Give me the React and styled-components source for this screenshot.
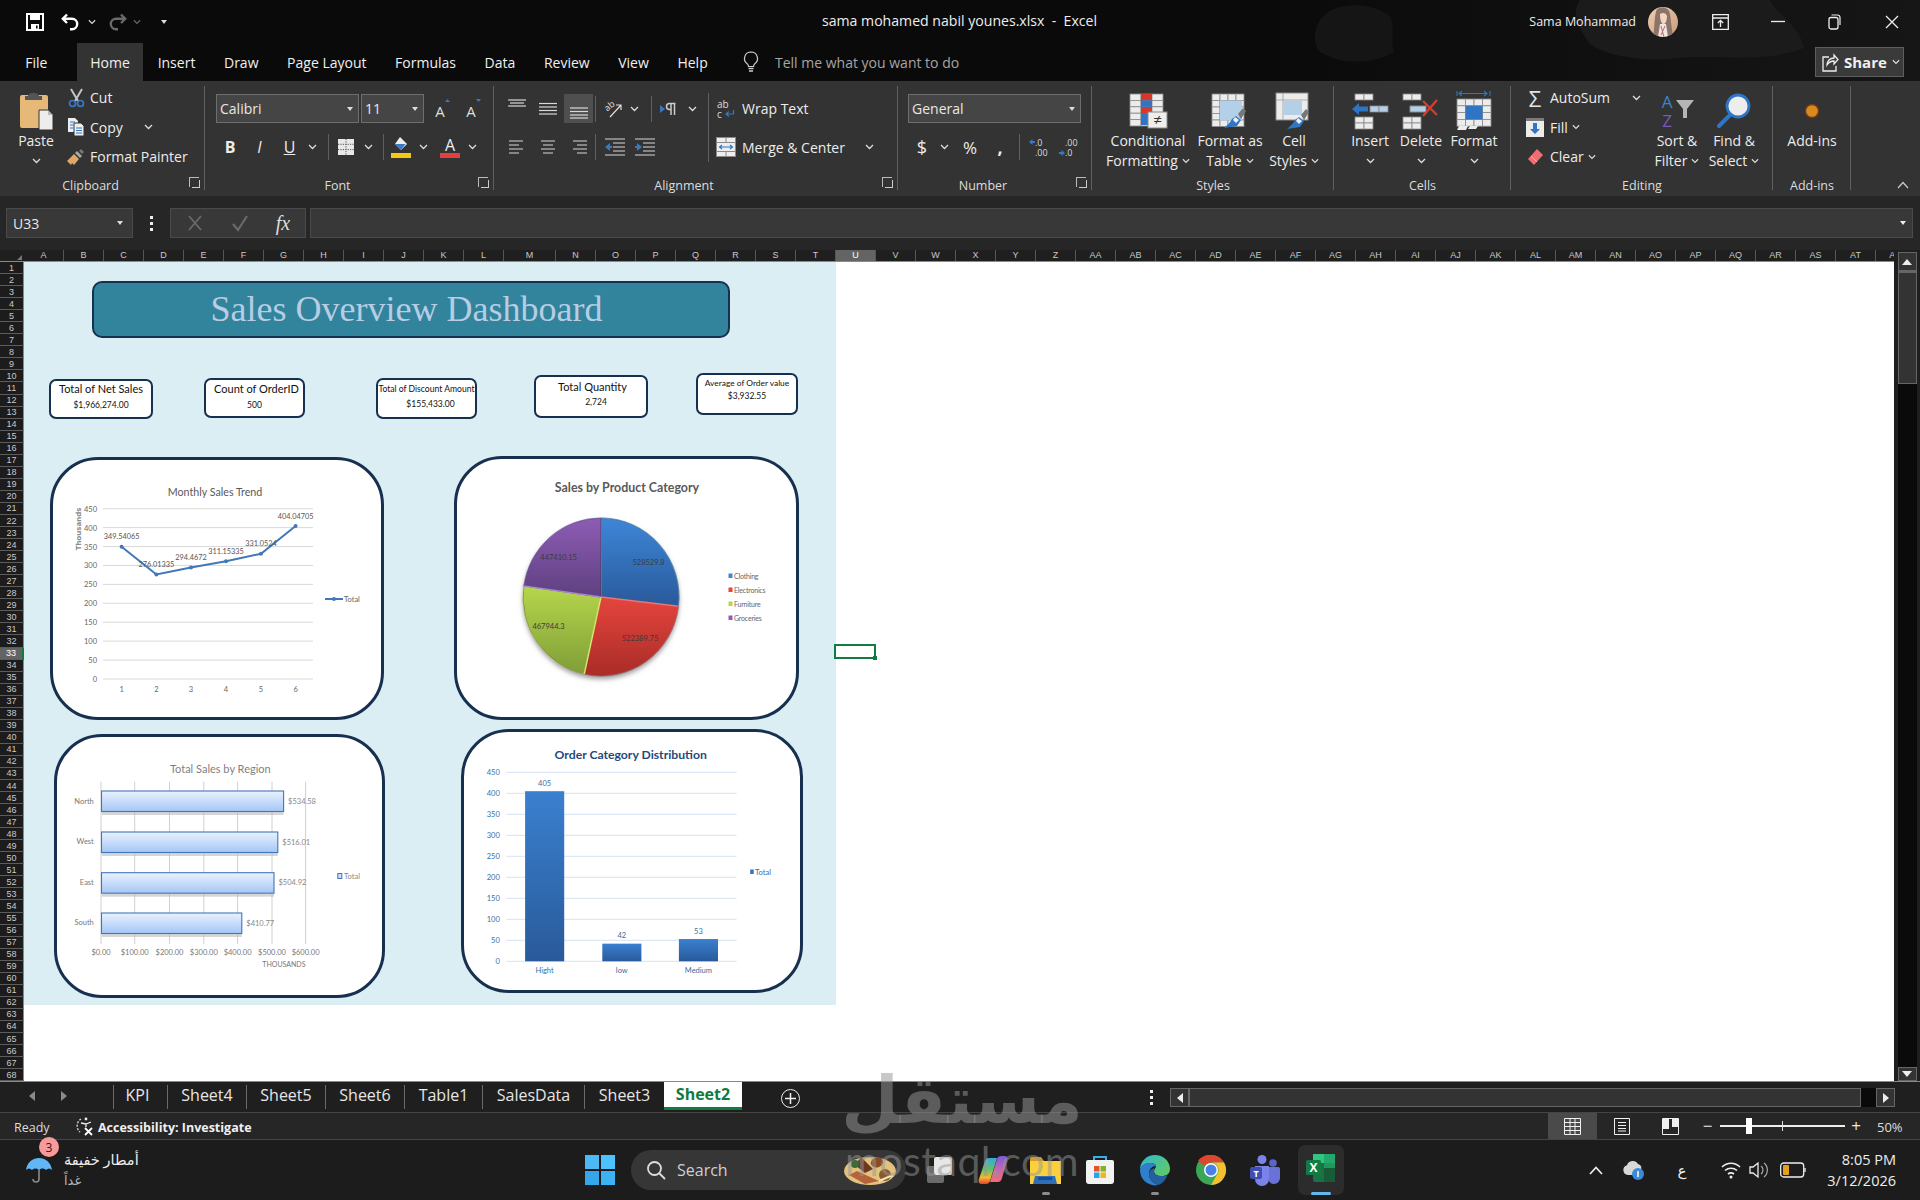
import React from "react";
import styled, { createGlobalStyle } from "styled-components";

const GlobalStyle = createGlobalStyle`
  * { box-sizing: border-box; }
  html, body { margin: 0; padding: 0; background: #1c1c1c; }
  body { font-family: "Open Sans", "Noto Sans", sans-serif; }
  svg { overflow: visible; }
`;

const ui = `"Open Sans", "Noto Sans", "DejaVu Sans", sans-serif`;
const chartFont = `Lato, "Liberation Sans", sans-serif`;

const Window = styled.div`
  width: 1920px;
  height: 1200px;
  position: relative;
  overflow: hidden;
  display: flex;
  flex-direction: column;
  font-family: ${ui};
  color: #eee;
`;

/* top band */
const TopBand = styled.div`
  height: 81px;
  background: #0a0a0a;
  position: relative;
  display: flex;
  flex-direction: column;
`;

const BandArt = styled.svg`
  position: absolute;
  inset: 0;
  width: 100%;
  height: 100%;
`;

const TitleRow = styled.div`
  height: 43px;
  display: flex;
  align-items: center;
  position: relative;
`;

const Qat = styled.div`
  display: flex;
  align-items: center;
  width: 400px;
  padding-left: 26px;
`;

const QatSlot = styled.span`
  display: inline-flex;
  align-items: center;
  justify-content: center;
  width: ${(p) => p.$w}px;
  margin-left: ${(p) => p.$ml || 0}px;
`;

const DocTitle = styled.div`
  position: absolute;
  left: 822px;
  top: 11px;
  font-size: 14.1px;
  line-height: 20px;
  color: #eee;
  white-space: pre;
`;

const WindowTools = styled.div`
  margin-left: auto;
  display: flex;
  align-items: center;
`;

const UserName = styled.span`
  font-size: 12.5px;
  color: #eee;
  margin-right: 12px;
`;

const AvatarWrap = styled.span`
  display: inline-flex;
  margin-right: 14px;
`;

const ToolSlot = styled.span`
  display: inline-flex;
  justify-content: center;
  align-items: center;
  width: 57px;
`;

const TabsRow = styled.div`
  height: 38px;
  display: flex;
  align-items: stretch;
  position: relative;
  padding-left: 11px;
`;

const Tab = styled.div`
  display: flex;
  align-items: center;
  padding: 0 ${(p) => p.$pad ?? 14.3}px;
  margin-left: ${(p) => p.$ml || 0}px;
  font-size: 14px;
  background: ${(p) => (p.$active ? "#333333" : "transparent")};
  color: #f0f0f0;
`;

const TellMe = styled.div`
  display: flex;
  align-items: center;
  margin-left: 20px;
  gap: 15px;
  font-size: 14px;
  color: #a6a6a6;
`;

const ShareButton = styled.div`
  position: absolute;
  left: 1815px;
  top: 4px;
  width: 89px;
  height: 30px;
  background: #3a3a3a;
  border: 1px solid #5e5e5e;
  display: flex;
  align-items: center;
  gap: 5px;
  padding-left: 6px;
  font-size: 15px;
  font-weight: 700;
  color: #f0f0f0;
`;

/* ribbon */
const Ribbon = styled.div`
  height: 115px;
  background: #333333;
  display: flex;
  position: relative;
`;

const Group = styled.div`
  width: ${(p) => p.$w}px;
  position: relative;
  display: flex;
  flex-direction: column;
  &::after {
    content: "";
    position: absolute;
    right: 0;
    top: 5px;
    bottom: 6px;
    width: 1px;
    background: #5f5f5f;
  }
`;

const GroupBody = styled.div`
  flex: 1;
  display: flex;
  min-height: 0;
  padding: ${(p) => p.$pt ?? 2}px 0 0 ${(p) => p.$pl ?? 0}px;
`;

const GroupLabel = styled.div`
  height: 22px;
  line-height: 22px;
  padding: 1px ${(p) => p.$pr || 0}px 0 0;
  text-align: center;
  font-size: 12.5px;
  color: #dcdcdc;
`;

const Launcher = styled.span`
  position: absolute;
  right: 6px;
  bottom: 9px;
  width: 10px;
  height: 10px;
  border-left: 1px solid #bbb;
  border-top: 1px solid #bbb;
  &::after {
    content: "";
    position: absolute;
    left: 2px;
    top: 2px;
    width: 7px;
    height: 7px;
    border-right: 1px solid #ccc;
    border-bottom: 1px solid #ccc;
  }
`;

const CollapseButton = styled.span`
  position: absolute;
  left: 1897px;
  top: 100px;
  display: flex;
`;

const BigButton = styled.div`
  width: ${(p) => p.$w}px;
  flex: none;
  display: flex;
  flex-direction: column;
  align-items: center;
  padding-top: 8px;
  font-size: 14px;
  line-height: 20px;
  color: #ececec;
  white-space: nowrap;
`;

const BigIcon = styled.div`
  height: 40px;
  display: flex;
  align-items: center;
  justify-content: center;
`;

const BigLine = styled.div`
  height: 20px;
  display: flex;
  align-items: center;
  gap: 4px;
`;

const SmallStack = styled.div`
  width: ${(p) => p.$w}px;
  flex: none;
  display: flex;
  flex-direction: column;
  margin: 0 ${(p) => p.$mr || 0}px 0 ${(p) => p.$ml || 0}px;
`;

const SmallRow = styled.div`
  height: 29.5px;
  display: flex;
  align-items: center;
  font-size: 14px;
  color: #ececec;
  white-space: nowrap;
`;

const SmallIcon = styled.span`
  width: 20px;
  flex: none;
  display: inline-flex;
  justify-content: center;
  margin-right: ${(p) => p.$mr ?? 5}px;
`;

const SigmaGlyph = styled.span`
  font-size: 22px;
  line-height: 24px;
  color: #e4e4e4;
`;

const ToolColumn = styled.div`
  display: flex;
  flex-direction: column;
  gap: 12px;
  padding-top: 13px;
`;

const ToolRow = styled.div`
  display: flex;
  align-items: center;
  height: ${(p) => p.$h || 24}px;
  font-size: 14px;
  color: #ececec;
  white-space: nowrap;
`;

const Slot = styled.span`
  flex: none;
  display: inline-flex;
  align-items: center;
  justify-content: center;
  width: ${(p) => p.$w}px;
  height: 100%;
  background: ${(p) => (p.$active ? "#4f4f4f" : "transparent")};
  font-size: ${(p) => p.$size || 14}px;
  font-weight: ${(p) => (p.$bold ? 700 : 400)};
  font-style: ${(p) => (p.$italic ? "italic" : "normal")};
  text-decoration: ${(p) => (p.$under ? "underline" : "none")};
`;

const ToolSep = styled.span`
  flex: none;
  width: 1px;
  height: 26px;
  background: #5f5f5f;
`;

const TallSep = styled.span`
  flex: none;
  width: 1px;
  height: 69px;
  margin: 12px 0 0 10px;
  background: #5f5f5f;
`;

const ComboBox = styled.div`
  width: ${(p) => p.$w}px;
  height: 29px;
  margin-right: ${(p) => p.$mr || 0}px;
  flex: none;
  background: #454545;
  border: 1px solid #6e6e6e;
  display: flex;
  align-items: center;
  justify-content: space-between;
  padding: 0 5px 0 3px;
  font-size: 14px;
  color: #e8e8e8;
`;

const DownTriangle = styled.span`
  width: 0;
  height: 0;
  border-left: 3.5px solid transparent;
  border-right: 3.5px solid transparent;
  border-top: 4px solid ${(p) => p.$color || "#ddd"};
`;

const Spread = styled.span`
  margin-left: ${(p) => p.$ml}px;
  display: inline-flex;
`;

/* formula bar */
const FormulaBar = styled.div`
  height: 54px;
  background: #262626;
  display: flex;
  padding: 12px 7px 12px 6px;
`;

const NameBox = styled.div`
  width: 127px;
  background: #383838;
  border: 1px solid #4a4a4a;
  display: flex;
  align-items: center;
  justify-content: space-between;
  padding: 0 9px 0 6px;
  font-size: 14px;
  color: #e8e8e8;
`;

const FormulaDots = styled.div`
  width: 37px;
  display: flex;
  flex-direction: column;
  align-items: center;
  justify-content: center;
  gap: 3px;
  span {
    width: 3px;
    height: 3px;
    background: #eee;
  }
`;

const FormulaButtons = styled.div`
  width: 136px;
  background: #383838;
  border: 1px solid #4a4a4a;
  display: flex;
  align-items: center;
  padding-left: 1px;
`;

const FormulaInput = styled.div`
  flex: 1;
  margin-left: 4px;
  background: #383838;
  border: 1px solid #4a4a4a;
  display: flex;
  align-items: center;
  justify-content: flex-end;
  padding-right: 6px;
`;

const FxText = styled.span`
  font-family: "Liberation Serif", serif;
  font-style: italic;
  font-size: 20px;
  color: #ddd;
`;

/* grid */
const HeaderRow = styled.div`
  height: 12px;
  display: flex;
  background: #1f1f1f;
  border-bottom: 1px solid #8a8a8a;
  position: relative;
`;

const CornerCell = styled.div`
  width: 24px;
  flex: none;
  display: flex;
  justify-content: flex-end;
  align-items: flex-end;
  padding: 0 2px 1px 0;
`;

const ColHeaders = styled.div`
  display: flex;
  width: 1872px;
  overflow: hidden;
`;

const ColHead = styled.div`
  width: ${(p) => (p.$wide ? 52 : 40)}px;
  flex: none;
  text-align: center;
  font-size: 9px;
  line-height: 11px;
  font-family: "Liberation Sans", sans-serif;
  color: ${(p) => (p.$sel ? "#fff" : "#c9c9c9")};
  background: ${(p) => (p.$sel ? "#646464" : "transparent")};
  border-right: 1px solid #555;
`;

const SheetRow = styled.div`
  height: 819px;
  display: flex;
  background: #1f1f1f;
`;

const RowHeaders = styled.div`
  width: 24px;
  flex: none;
  display: flex;
  flex-direction: column;
`;

const RowHead = styled.div`
  flex: 1;
  display: flex;
  align-items: center;
  justify-content: center;
  font-size: 9px;
  font-family: "Liberation Sans", sans-serif;
  color: ${(p) => (p.$sel ? "#fff" : "#c9c9c9")};
  background: ${(p) => (p.$sel ? "#646464" : "#1c1c1c")};
  border-bottom: 1px solid #5c5c5c;
  border-right: ${(p) => (p.$sel ? "2px solid #107c41" : "1px solid #8a8a8a")};
`;

const Canvas = styled.div`
  width: 1870px;
  flex: none;
  background: #fff;
  position: relative;
`;

const DashPanel = styled.div`
  width: 812px;
  height: 743px;
  background: #daeef3;
  position: relative;
`;

const SelectedCell = styled.div`
  position: absolute;
  left: 810px;
  top: 382px;
  width: 42px;
  height: 15px;
  border: 2px solid #107c41;
  &::after {
    content: "";
    position: absolute;
    right: -3px;
    bottom: -3px;
    width: 4px;
    height: 4px;
    background: #107c41;
  }
`;

const Banner = styled.div`
  position: absolute;
  left: 67.5px;
  top: 18.5px;
  width: 638px;
  height: 57px;
  padding-right: 8px;
  background: #31849b;
  border: 2.5px solid #17304f;
  border-radius: 10px;
  display: flex;
  align-items: center;
  justify-content: center;
  font-family: "Liberation Serif", serif;
  font-size: 36px;
  color: #b8cce4;
`;

const KpiCard = styled.div`
  position: absolute;
  left: ${(p) => p.$x - 24}px;
  top: ${(p) => p.$y - 262}px;
  width: ${(p) => p.$w}px;
  height: ${(p) => p.$h}px;
  background: #fff;
  border: 2.5px solid #17304f;
  border-radius: 7px;
  display: flex;
  flex-direction: column;
  align-items: center;
  padding-top: ${(p) => p.$pt}px;
  font-family: ${chartFont};
  color: #111;
`;

const KpiTitle = styled.div`
  font-size: ${(p) => p.$size}px;
  line-height: 13px;
  margin-left: ${(p) => p.$tx || 0}px;
  white-space: nowrap;
`;

const KpiValue = styled.div`
  font-size: 8.5px;
  line-height: 10px;
  margin-top: ${(p) => p.$gap}px;
  margin-left: ${(p) => p.$vx || 0}px;
  white-space: nowrap;
`;

const ChartCard = styled.div`
  position: absolute;
  left: ${(p) => p.$x - 24}px;
  top: ${(p) => p.$y - 262}px;
  width: ${(p) => p.$w}px;
  height: ${(p) => p.$h}px;
  background: #fff;
  border: 3px solid #17304f;
  border-radius: 48px;
  overflow: hidden;
  svg {
    display: block;
    width: 100%;
    height: 100%;
    font-family: ${chartFont};
  }
`;

const VScroll = styled.div`
  width: 26px;
  flex: none;
  display: flex;
  flex-direction: column;
  align-items: center;
  margin-top: -12px;
  position: relative;
  background: #1f1f1f;
  padding-top: 2px;
`;

const ScrollButton = styled.div`
  width: 19px;
  height: ${(p) => p.$h}px;
  background: #333;
  border: 1px solid #666;
  display: flex;
  align-items: center;
  justify-content: center;
`;

const ScrollThumb = styled.div`
  width: 19px;
  height: 113px;
  background: #333;
  border: 1px solid #666;
  border-top-width: 2px;
`;

const ScrollTrack = styled.div`
  width: 19px;
  flex: 1;
  background: #0a0a0a;
`;

/* sheet tabs */
const TabStrip = styled.div`
  height: 32px;
  background: #1f1f1f;
  border-top: 1px solid #8a8a8a;
  border-bottom: 1px solid #444;
  display: flex;
  align-items: flex-start;
  position: relative;
`;

const TabNav = styled.div`
  width: 113px;
  height: 28px;
  flex: none;
  display: flex;
  align-items: center;
  padding-left: 27px;
  gap: 22px;
`;

const SheetTab = styled.div`
  width: ${(p) => p.$w}px;
  height: ${(p) => (p.$active ? 28 : 24)}px;
  margin-top: ${(p) => (p.$active ? 0 : 3)}px;
  padding: 0 ${(p) => p.$pr || 0}px ${(p) => (p.$active ? 1 : 4)}px 0;
  flex: none;
  display: flex;
  align-items: center;
  justify-content: center;
  font-size: 16px;
  background: ${(p) => (p.$active ? "#fff" : "transparent")};
  color: ${(p) => (p.$active ? "#107c41" : "#e6e6e6")};
  font-weight: ${(p) => (p.$active ? 700 : 400)};
  border-left: ${(p) => (p.$active ? "none" : "1px solid #6a6a6a")};
  border-bottom: ${(p) => (p.$active ? "3px solid #107c41" : "none")};
`;

const AddSheet = styled.div`
  margin-left: 39px;
  margin-top: 7px;
  width: 19px;
  height: 19px;
  border: 1.5px solid #eee;
  border-radius: 50%;
  display: flex;
  align-items: center;
  justify-content: center;
`;

const HScrollArea = styled.div`
  position: absolute;
  left: 1146px;
  right: 25px;
  top: 6px;
  height: 19px;
  display: flex;
  align-items: center;
`;

const HDots = styled(FormulaDots)`
  width: 10px;
  margin-right: 14px;
`;

const HButton = styled.div`
  width: 19px;
  height: 19px;
  background: #333;
  border: 1px solid #666;
  display: flex;
  align-items: center;
  justify-content: center;
`;

const HThumb = styled.div`
  flex: 1;
  height: 19px;
  background: #333;
  border: 1px solid #666;
`;

const HTrack = styled.div`
  width: 15px;
  height: 19px;
  background: #0a0a0a;
`;

/* status bar */
const StatusBar = styled.div`
  height: 27px;
  background: #262626;
  border-bottom: 1px solid #444;
  display: flex;
  align-items: center;
  font-size: 12.5px;
  color: #ddd;
`;

const ReadyText = styled.span`
  margin: 2px 0 0 14px;
  width: 61px;
`;

const AccessText = styled.span`
  font-weight: 700;
  color: #f0f0f0;
  margin: 2px 0 0 3px;
`;

const StatusRight = styled.div`
  margin-left: auto;
  display: flex;
  align-items: center;
  height: 100%;
`;

const ViewButton = styled.div`
  width: 49px;
  height: 100%;
  display: flex;
  align-items: center;
  justify-content: center;
  background: ${(p) => (p.$active ? "#4a4a4a" : "transparent")};
`;

const ZoomSign = styled.span`
  width: ${(p) => p.$w}px;
  text-align: center;
  font-size: 17px;
  line-height: 20px;
  color: #e8e8e8;
`;

const ZoomTrack = styled.div`
  width: 125px;
  height: 2px;
  background: #eee;
  position: relative;
`;

const ZoomThumb = styled.span`
  position: absolute;
  left: 26px;
  top: -7px;
  width: 6px;
  height: 16px;
  background: #fff;
`;

const ZoomTick = styled.span`
  position: absolute;
  left: 62px;
  top: -4px;
  width: 1px;
  height: 10px;
  background: #ddd;
`;

const ZoomValue = styled.span`
  width: 53px;
  padding: 2px 0 0 10px;
  font-size: 13px;
`;

/* taskbar */
const Taskbar = styled.div`
  flex: 1;
  background: #1c1c1c;
  display: flex;
  align-items: center;
  position: relative;
`;

const Weather = styled.div`
  width: 585px;
  flex: none;
  display: flex;
  align-items: center;
  padding-left: 25px;
  position: relative;
`;

const WeatherBadge = styled.span`
  position: absolute;
  left: 39px;
  top: -12px;
  width: 20px;
  height: 20px;
  border-radius: 50%;
  background: #f79a9a;
  color: #222;
  font-size: 12px;
  display: flex;
  align-items: center;
  justify-content: center;
`;

const WeatherText = styled.div`
  margin-left: 11px;
  display: flex;
  flex-direction: column;
  align-items: flex-start;
  font-family: "Noto Sans", "DejaVu Sans", sans-serif;
  font-size: 14.5px;
  line-height: 21px;
  small {
    font-size: 13px;
    color: #b5b5b5;
  }
`;

const StartButton = styled.span`
  display: inline-flex;
  width: 46px;
`;

const SearchBox = styled.div`
  width: 275px;
  height: 40px;
  background: #363636;
  border-radius: 20px;
  display: flex;
  align-items: center;
  padding: 0 9px 0 15px;
  gap: 11px;
  font-size: 16px;
  color: #cfcfcf;
  margin-right: 7px;
  span {
    flex: 1;
  }
`;

const TaskSlot = styled.div`
  width: ${(p) => p.$w}px;
  height: 60px;
  flex: none;
  display: flex;
  align-items: center;
  justify-content: center;
  position: relative;
  &::after {
    content: "";
    display: ${(p) => (p.$dot || p.$active ? "block" : "none")};
    position: absolute;
    bottom: 5px;
    left: 50%;
    transform: translateX(-50%);
    width: ${(p) => (p.$active ? 20 : 8)}px;
    height: 3px;
    border-radius: 2px;
    background: ${(p) => (p.$active ? "#63b9ee" : "#8c8c8c")};
  }
`;

const ExcelTile = styled.div`
  width: 46px;
  height: 50px;
  border-radius: 7px;
  background: #2c2c2c;
  display: flex;
  align-items: center;
  justify-content: center;
  padding-bottom: 4px;
`;

const TraySlot = styled.span`
  width: ${(p) => p.$w}px;
  flex: none;
  display: inline-flex;
  justify-content: center;
  font-size: 15px;
  color: #eee;
`;

const Clock = styled.div`
  width: 78px;
  display: flex;
  flex-direction: column;
  align-items: flex-end;
  font-size: 14.5px;
  line-height: 21px;
  color: #eee;
  white-space: nowrap;
`;

const Watermark = styled.div`
  position: absolute;
  left: 842px;
  top: 1056px;
  width: 240px;
  display: flex;
  flex-direction: column;
  align-items: center;
  pointer-events: none;
  color: rgba(150, 150, 150, 0.52);
  line-height: 1;
`;

const WatermarkArabic = styled.div`
  font-family: "DejaVu Sans", sans-serif;
  font-weight: 700;
  font-size: 66px;
  line-height: 90px;
`;

const WatermarkLatin = styled.div`
  font-family: "Lato", sans-serif;
  font-size: 41px;
  line-height: 30px;
  letter-spacing: 0.5px;
`;

/* small drawn icons */
const Chevron = ({ color = "#ddd", w = 9 }) => (
  <svg width={w} height="6" viewBox="0 0 9 6">
    <path d="M1 1l3.5 3.5L8 1" fill="none" stroke={color} strokeWidth="1.3" />
  </svg>
);

const SaveIcon = () => (
  <svg width="18" height="18" viewBox="0 0 18 18">
    <path d="M1 1h16v16H1z" fill="none" stroke="#fff" strokeWidth="2" />
    <path d="M4 1h10v6H4z" fill="#fff" />
    <path d="M5 11h8v6H5z" fill="#fff" />
    <path d="M10 12.5h1.6v3H10z" fill="#0a0a0a" />
  </svg>
);

const UndoIcon = ({ color = "#fff", flip }) => (
  <svg width="20" height="18" viewBox="0 0 20 18">
    <g transform={flip ? "translate(20 0) scale(-1 1)" : undefined}>
      <path d="M6 1.5L1.8 5.8 6 10" fill="none" stroke={color} strokeWidth="2.4" />
      <path d="M2.5 5.8h8.5a5.2 5.2 0 0 1 0 10.4H9" fill="none" stroke={color} strokeWidth="2.4" />
    </g>
  </svg>
);

const BulbIcon = () => (
  <svg width="18" height="22" viewBox="0 0 18 22">
    <path d="M9 1a6.5 6.5 0 0 0-3.6 11.9c.8.7 1 1.4 1 2.6h5.2c0-1.2.2-1.9 1-2.6A6.5 6.5 0 0 0 9 1z" fill="none" stroke="#ccc" strokeWidth="1.2" />
    <path d="M6.5 17.5h5M7 20h4" stroke="#ccc" strokeWidth="1.4" />
  </svg>
);

const RibbonDisplayIcon = () => (
  <svg width="17" height="16" viewBox="0 0 17 16">
    <path d="M.7.7h15.6v14.6H.7z" fill="none" stroke="#eee" strokeWidth="1.3" />
    <path d="M1 4h15" stroke="#eee" strokeWidth="1.5" />
    <path d="M8.5 13V6.5M5.8 9l2.7-2.7L11.2 9" fill="none" stroke="#eee" strokeWidth="1.3" />
  </svg>
);

const Avatar = () => (
  <svg width="30" height="30" viewBox="0 0 30 30">
    <defs>
      <linearGradient id="avatarBg" x1="0" y1="0" x2="1" y2="1">
        <stop offset="0" stopColor="#f1cdb0" />
        <stop offset="1" stopColor="#c99a80" />
      </linearGradient>
      <clipPath id="avatarClip"><circle cx="15" cy="15" r="15" /></clipPath>
    </defs>
    <g clipPath="url(#avatarClip)">
      <rect width="30" height="30" fill="url(#avatarBg)" />
      <path d="M9 2c5-3 12-2 13 5 1 8 2 16 3 23H5C7 20 6 8 9 2z" fill="#8d7468" />
      <path d="M12 7c3-2 6-1 7 2 0 4-1 7-3 8s-4-3-4-10z" fill="#f3d5c0" />
      <path d="M12 17l6 0 2 13H10z" fill="#efe6df" />
      <path d="M13 19l3 11M17 19l-4 9" stroke="#b06a7c" strokeWidth="1" />
    </g>
  </svg>
);

const ShareIcon = () => (
  <svg width="17" height="20" viewBox="0 0 17 20">
    <path d="M7 5H1v14h13v-5" fill="none" stroke="#eee" strokeWidth="1.3" />
    <path d="M5 13c0-4 3-7 7-7V3l4 4.5L12 12V9c-3 0-5 1-7 4z" fill="none" stroke="#eee" strokeWidth="1.3" />
  </svg>
);

const PasteIcon = () => (
  <svg width="36" height="40" viewBox="0 0 36 40">
    <path d="M2 6a2 2 0 0 1 2-2h24a2 2 0 0 1 2 2v31H4a2 2 0 0 1-2-2z" fill="#e6b978" />
    <path d="M7 5h3c0-4 11-4 11 0h3v4H7z" fill="#555" />
    <path d="M21 19h9l5 5v15H21z" fill="#ededed" stroke="#333" strokeWidth="1" />
    <path d="M30 19v5h5z" fill="#bbb" />
  </svg>
);

const CutIcon = () => (
  <svg width="17" height="20" viewBox="0 0 17 20">
    <path d="M3 1l7 12M14 1L7 13" stroke="#c4c4c4" strokeWidth="2" />
    <circle cx="4.5" cy="15.5" r="3" fill="none" stroke="#3a78c4" strokeWidth="1.7" />
    <circle cx="12.5" cy="15.5" r="3" fill="none" stroke="#3a78c4" strokeWidth="1.7" />
  </svg>
);

const CopyIcon = () => (
  <svg width="18" height="20" viewBox="0 0 18 20">
    <path d="M1 1h7l3 3v11H1z" fill="#eee" />
    <path d="M7 6h7l3 3v10H7z" fill="#eee" stroke="#333" strokeWidth="1" />
    <path d="M3 5h5M3 8h3M3 11h3M9 11h6M9 13.5h6M9 16h6" stroke="#2f75c4" strokeWidth="1.2" />
  </svg>
);

const PainterIcon = () => (
  <svg width="20" height="18" viewBox="0 0 20 18">
    <path d="M1 13l7-7 5 5-5 6-2-2-1 2z" fill="#dfa868" />
    <path d="M9 5l2-2 5 5-2 2z" fill="#aaa" />
    <path d="M13 3l2-2 3 3-2 2z" fill="#777" />
  </svg>
);

const GrowFont = ({ up }) => (
  <svg width="20" height="24" viewBox="0 0 20 24">
    <text x="9" y="20" textAnchor="middle" fontSize="15" fill="#ddd" fontFamily="Open Sans">A</text>
    <path d={up ? "M14 5l2.5-3 2.5 3z" : "M14 2h5l-2.5 3z"} fill="#3a78c4" />
  </svg>
);

const BordersIcon = () => (
  <svg width="18" height="18" viewBox="0 0 18 18">
    <rect x="1" y="1" width="16" height="16" fill="#e8e8e8" />
    <path d="M9 1v16M1 6.3h16M1 11.6h16" stroke="#555" strokeWidth="1" strokeDasharray="1.2 1.2" />
  </svg>
);

const FillColorIcon = () => (
  <svg width="20" height="22" viewBox="0 0 20 22">
    <path d="M9 1l7 7-6 6-6-6z" fill="#eee" />
    <path d="M3.5 8h11l-4.5 6z" fill="#3a78c4" />
    <rect y="17" width="20" height="5" fill="#f2c811" />
  </svg>
);

const FontColorIcon = () => (
  <svg width="20" height="24" viewBox="0 0 20 24">
    <text x="10" y="16" textAnchor="middle" fontSize="16" fill="#eee" fontFamily="Open Sans">A</text>
    <rect y="18" width="20" height="5" fill="#e04040" />
  </svg>
);

const AlignVIcon = ({ mode }) => {
  const ys = { top: [3, 6, 9], mid: [6.5, 10, 13.5, 17], bottom: [11, 14.5, 18, 21] }[mode];
  return (
    <svg width="20" height="24" viewBox="0 0 20 24">
      {ys.map((y, i) => (
        <path key={y} d={`M${i === 1 && mode === "top" ? 3 : 1} ${y}H${i === 1 && mode === "top" ? 17 : 19}`} stroke="#d8d8d8" strokeWidth="1.2" />
      ))}
    </svg>
  );
};

const AlignHIcon = ({ mode }) => {
  const line = (y, len) => {
    if (mode === "left") return `M1 ${y}H${1 + len}`;
    if (mode === "right") return `M${17 - len} ${y}H17`;
    return `M${9 - len / 2} ${y}H${9 + len / 2}`;
  };
  return (
    <svg width="18" height="16" viewBox="0 0 18 16">
      <path d={[line(2, 14), line(6, 10), line(10, 14), line(14, 10)].join("")} stroke="#d8d8d8" strokeWidth="1.2" />
    </svg>
  );
};

const IndentIcon = ({ out }) => (
  <svg width="20" height="18" viewBox="0 0 20 18">
    <path d="M0 1h20M8 5h12M8 9h12M8 13h12M0 17h20" stroke="#d8d8d8" strokeWidth="1.2" />
    <path d={out ? "M0 9l5-4v3h2v2H5v3z" : "M7 9L2 5v3H0v2h2v3z"} fill="#3a78c4" />
  </svg>
);

const OrientIcon = () => (
  <svg width="20" height="20" viewBox="0 0 20 20">
    <text x="3" y="11" fontSize="9" fill="#ddd" fontFamily="Open Sans" transform="rotate(-40 6 10)">ab</text>
    <path d="M7 18L18 6M13 6h5v5" fill="none" stroke="#ddd" strokeWidth="1.2" />
  </svg>
);

const RtlIcon = () => (
  <svg width="18" height="14" viewBox="0 0 18 14">
    <path d="M0 3l5 4-5 4z" fill="#3a78c4" />
    <path d="M11 1v12M14.5 1v12M15.5 1.5h-6a3 3 0 0 0 0 6h2" fill="none" stroke="#ccc" strokeWidth="1.5" />
  </svg>
);

const WrapIcon = () => (
  <svg width="18" height="24" viewBox="0 0 18 24">
    <text x="0" y="11" fontSize="10" fill="#ddd" fontFamily="Open Sans">ab</text>
    <text x="0" y="21" fontSize="10" fill="#ddd" fontFamily="Open Sans">c</text>
    <path d="M16.5 13v4h-7M12 14.5L9 17l3 2.5" fill="none" stroke="#3a78c4" strokeWidth="1.2" />
  </svg>
);

const MergeIcon = () => (
  <svg width="20" height="20" viewBox="0 0 20 20">
    <rect width="20" height="20" fill="#8a8a8a" />
    <path d="M1 1h8.5v4H1zM10.5 1H19v4h-8.5zM1 15h8.5v4H1zM10.5 15H19v4h-8.5z" fill="#eee" />
    <rect x="1" y="6" width="18" height="8" fill="#eee" />
    <path d="M4 10h12M6 8l-2.5 2L6 12M14 8l2.5 2-2.500 2" fill="none" stroke="#2f75c4" strokeWidth="1.2" />
  </svg>
);

const DecimalIcon = ({ inc }) => (
  <svg width="20" height="24" viewBox="0 0 20 24">
    <text x="6" y="10.5" fontSize="9" fill="#ddd" fontFamily="Open Sans">{inc ? ".0" : ".00"}</text>
    <text x="6" y="21" fontSize="9" fill="#ddd" fontFamily="Open Sans">{inc ? ".00" : ".0"}</text>
    <path d={inc ? "M0 7l3.5-3v2H6v2H3.5v2z" : "M6 18l-3.5-3v2H0v2h2.5v2z"} fill="#3a78c4" />
  </svg>
);

const CellBlock = ({ x, y, cols, rows, w = 9, h = 6, fill = "#ececec", stroke = "#8a8a8a" }) => {
  const out = [];
  for (let r = 0; r < rows; r++) {
    for (let c = 0; c < cols; c++) {
      out.push(<rect key={`${r}-${c}`} x={x + c * w} y={y + r * h} width={w} height={h} fill={fill} stroke={stroke} strokeWidth="0.8" />);
    }
  }
  return <g>{out}</g>;
};

const BrushTip = ({ x, y }) => (
  <g transform={`translate(${x} ${y})`}>
    <path d="M14 0l5-6 3 3-5 8z" fill="#777" />
    <path d="M12 2l5 4-4 6-13 2c3-3 6-5 8-9z" fill="#2f75c4" />
    <path d="M11 3l4 3-3 3-3-3z" fill="#eee" />
  </g>
);

const ConditionalIcon = () => (
  <svg width="38" height="36" viewBox="0 0 38 36">
    <CellBlock x={1} y={1} cols={3} rows={5} w={11} h={6.4} />
    <rect x="12" y="1" width="11" height="6.4" fill="#d8382c" />
    <rect x="12" y="7.4" width="11" height="6.4" fill="#2f75c4" />
    <rect x="12" y="14" width="11" height="6.4" fill="#d8382c" />
    <rect x="12" y="20" width="11" height="12" fill="#2f75c4" />
    <rect x="19" y="19" width="19" height="16" fill="#eee" stroke="#8a8a8a" />
    <text x="28.5" y="32" textAnchor="middle" fontSize="15" fill="#333" fontFamily="Open Sans">≠</text>
  </svg>
);

const FormatTableIcon = () => (
  <svg width="38" height="36" viewBox="0 0 38 36">
    <CellBlock x={1} y={1} cols={4} rows={5} w={8} h={6.5} />
    <rect x="9" y="7.5" width="22" height="20" fill="#b4cfe8" />
    <BrushTip x={13} y={21} />
  </svg>
);

const CellStylesIcon = () => (
  <svg width="38" height="38" viewBox="0 0 38 38">
    <rect x="1" y="1" width="32" height="27" fill="#ececec" stroke="#8a8a8a" />
    <path d="M1 8h32M8 1v27" stroke="#aaa" />
    <rect x="9" y="9" width="18" height="14" fill="#b4cfe8" />
    <BrushTip x={12} y={23} />
  </svg>
);

const InsertIcon = () => (
  <svg width="36" height="36" viewBox="0 0 36 36">
    <CellBlock x={3} y={1} cols={2} rows={1} w={9} h={6} />
    <CellBlock x={18} y={13} cols={2} rows={1} w={9} h={6} fill="#b4cfe8" />
    <CellBlock x={3} y={24} cols={2} rows={2} w={9} h={6} />
    <path d="M0 16l7-6v3.5h9v5H7V22z" fill="#2f75c4" />
  </svg>
);

const DeleteIcon = () => (
  <svg width="36" height="36" viewBox="0 0 36 36">
    <CellBlock x={0} y={1} cols={2} rows={1} w={9} h={6} />
    <rect x="7" y="13" width="16" height="6" fill="#b4cfe8" stroke="#8a8a8a" />
    <CellBlock x={0} y={24} cols={2} rows={2} w={9} h={6} />
    <path d="M20 8l14 14M34 7L20 23" stroke="#d83a2c" strokeWidth="2.4" />
  </svg>
);

const FormatCellsIcon = () => (
  <svg width="36" height="42" viewBox="0 0 36 42">
    <path d="M1 1v5M34 1v5M3 3.5h28M6 1L3 3.5 6 6M28 1l3 2.5L28 6" fill="none" stroke="#2f75c4" strokeWidth="1.1" />
    <CellBlock x={1} y={9} cols={4} rows={4} w={8.5} h={6.8} />
    <rect x="9.5" y="15.800" width="17" height="13.6" fill="#2f75c4" />
    <path d="M3 36h9l-2 4H1zM14 36h8l-2 3h-8z" fill="#ececec" />
  </svg>
);

const FillIcon = () => (
  <svg width="18" height="19" viewBox="0 0 18 19">
    <rect width="18" height="19" fill="#ececec" />
    <rect width="18" height="3" fill="#7b7b7b" />
    <path d="M9 16l-5-5h3V5h4v6h3z" fill="#2f75c4" />
  </svg>
);

const EraserIcon = () => (
  <svg width="18" height="18" viewBox="0 0 18 18">
    <path d="M11 1l6 6-9 10-6-6z" fill="#ee6e73" />
    <path d="M5 8l6 6" stroke="#f6b3b5" strokeWidth="1" />
  </svg>
);

const SortIcon = () => (
  <svg width="36" height="40" viewBox="0 0 36 40">
    <text x="8" y="17" textAnchor="middle" fontSize="17" fill="#3a83d0" fontFamily="Open Sans">A</text>
    <text x="8" y="36" textAnchor="middle" fontSize="17" fill="#7a5ab5" fontFamily="Open Sans">Z</text>
    <path d="M17 9h18l-7 9v9h-4v-9z" fill="#b5b5b5" />
  </svg>
);

const FindIcon = () => (
  <svg width="36" height="38" viewBox="0 0 36 38">
    <circle cx="22" cy="14" r="11" fill="#ededed" stroke="#2f75c4" strokeWidth="2.8" />
    <path d="M14 23L3 34" stroke="#2f75c4" strokeWidth="4" strokeLinecap="round" />
  </svg>
);

const AddInIcon = () => (
  <svg width="16" height="16" viewBox="0 0 16 16">
    <circle cx="8" cy="8" r="6.5" fill="#d98a1c" stroke="#7a3a1a" strokeWidth="1.3" />
  </svg>
);

const IconX = ({ color }) => (
  <svg width="18" height="18" viewBox="0 0 18 18">
    <path d="M3 2l12 14M15 2L3 16" stroke={color} strokeWidth="1.8" />
  </svg>
);

const IconCheck = ({ color }) => (
  <svg width="18" height="18" viewBox="0 0 18 18">
    <path d="M2 10l5 6L16 2" fill="none" stroke={color} strokeWidth="2.2" />
  </svg>
);

const CloseIcon = () => (
  <svg width="14" height="14" viewBox="0 0 14 14">
    <path d="M1 1l12 12M13 1L1 13" stroke="#eee" strokeWidth="1.3" />
  </svg>
);

const RestoreIcon = () => (
  <svg width="13" height="16" viewBox="0 0 13 16">
    <rect x="1" y="3.5" width="9" height="11.5" rx="2" fill="none" stroke="#eee" strokeWidth="1.3" />
    <path d="M3.5 1h6A2.5 2.5 0 0 1 12 3.5V11" fill="none" stroke="#eee" strokeWidth="1.2" />
  </svg>
);

const MinIcon = () => (
  <svg width="14" height="4" viewBox="0 0 14 4">
    <path d="M0 1.5h14" stroke="#eee" strokeWidth="1.3" />
  </svg>
);

const ArrowTri = ({ dir, color = "#eee", s = 5 }) => {
  const paths = {
    up: "M0 8L5 2l5 6z",
    down: "M0 2l5 6 5-6z",
    left: "M8 0L2 5l6 5z",
    right: "M2 0l6 5-6 5z",
  };
  return (
    <svg width={s * 2} height={s * 2} viewBox="0 0 10 10">
      <path d={paths[dir]} fill={color} />
    </svg>
  );
};

const AccessIcon = () => (
  <svg width="20" height="20" viewBox="0 0 20 20">
    <path d="M6 3a8 8 0 0 0-1 13" fill="none" stroke="#ddd" strokeWidth="1.3" strokeDasharray="2 1.5" />
    <circle cx="11" cy="3" r="1.4" fill="#eee" />
    <path d="M6 7l5 1 5-2M11 8v3" stroke="#eee" strokeWidth="1.3" fill="none" />
    <path d="M10 12l7 7M17 12l-7 7" stroke="#fff" strokeWidth="1.8" />
  </svg>
);

const GridViewIcon = () => (
  <svg width="17" height="17" viewBox="0 0 17 17">
    <path d="M.5.5h16v16H.5zM.5 4.500h16M.5 8.500h16M.5 12.500h16M6 .5v16M11 .5v16" fill="none" stroke="#f0f0f0" />
  </svg>
);

const PageViewIcon = () => (
  <svg width="16" height="17" viewBox="0 0 16 17">
    <path d="M.5.5h15v16H.5z" fill="none" stroke="#f0f0f0" />
    <path d="M4 4.500h8M4 7.500h8M4 10.500h8M4 13h8" stroke="#f0f0f0" />
  </svg>
);

const BreakViewIcon = () => (
  <svg width="17" height="17" viewBox="0 0 17 17">
    <path d="M.5.5h16v16H.5z" fill="none" stroke="#f0f0f0" />
    <path d="M1 1h6v10H1zM10 1h6v8h-6z" fill="#f0f0f0" />
  </svg>
);

const UmbrellaIcon = () => (
  <svg width="28" height="26" viewBox="0 0 28 26">
    <path d="M1 13C2 5 8 1 14 1s12 4 13 12c-2-2-4-2-6 0-2-2-5-2-7 0-2-2-5-2-7 0-2-2-4-2-6 0z" fill="#62b6f5" />
    <path d="M14 12v10c0 4-6 4-6 0" fill="none" stroke="#8a8a8a" strokeWidth="1.6" />
  </svg>
);

const WinLogo = () => (
  <svg width="30" height="30" viewBox="0 0 30 30">
    <path d="M0 0h14v14H0z" fill="#4cb8f5" />
    <path d="M16 0h14v14H16z" fill="#4cc2ff" />
    <path d="M0 16h14v14H0z" fill="#33a6ec" />
    <path d="M16 16h14v14H16z" fill="#3db2f2" />
  </svg>
);

const SearchIcon = () => (
  <svg width="20" height="20" viewBox="0 0 20 20">
    <circle cx="8.5" cy="8.5" r="6.5" fill="none" stroke="#ddd" strokeWidth="1.8" />
    <path d="M13 13l6 6" stroke="#ddd" strokeWidth="1.8" />
  </svg>
);

const SearchDoodle = () => (
  <svg width="54" height="34" viewBox="0 0 54 34">
    <ellipse cx="27" cy="18" rx="26" ry="14" fill="#e2c27e" />
    <path d="M6 22l16 9 14-3-22-10z" fill="#b5643a" />
    <path d="M18 4l12 12-8 4-10-8z" fill="#6a3a20" />
    <path d="M30 6c4-3 9-2 10 2s-5 8-9 6-4-5-1-8z" fill="#8a4a24" />
    <circle cx="42" cy="22" r="6" fill="#8a5a2a" />
    <circle cx="12" cy="11" r="4" fill="#3d6a3a" />
    <path d="M36 28l14-6" stroke="#f0e2c0" strokeWidth="2" />
  </svg>
);

const TaskViewIcon = () => (
  <svg width="26" height="26" viewBox="0 0 26 26">
    <rect x="0" y="9" width="17" height="17" rx="2" fill="#6b6b6b" />
    <rect x="7" y="0" width="18" height="18" rx="2" fill="#e6e6e6" />
  </svg>
);

const CopilotIcon = () => (
  <svg width="30" height="30" viewBox="0 0 30 30">
    <defs>
      <linearGradient id="copA" x1="0" y1="0" x2="0" y2="1">
        <stop offset="0" stopColor="#38a8e0" />
        <stop offset="0.45" stopColor="#63c25f" />
        <stop offset="0.75" stopColor="#f2b830" />
        <stop offset="1" stopColor="#e8402f" />
      </linearGradient>
      <linearGradient id="copB" x1="0" y1="0" x2="0" y2="1">
        <stop offset="0" stopColor="#7a5ad8" />
        <stop offset="0.5" stopColor="#c06ab0" />
        <stop offset="1" stopColor="#f56a70" />
      </linearGradient>
    </defs>
    <path d="M11 3h8L12 26c-.7 2-2 3-4 3H4c-3 0-4-2-3-5l6-18c.7-2 2-3 4-3z" fill="url(#copA)" />
    <path d="M20 27h-8l7-23c.7-2 2-3 4-3h3c3 0 4 2 3 5l-5 17c-.7 2.500-2 4-4 4z" fill="url(#copB)" />
  </svg>
);

const ExplorerIcon = () => (
  <svg width="32" height="28" viewBox="0 0 32 28">
    <path d="M0 3a2 2 0 0 1 2-2h9l3 4H0z" fill="#d89a22" />
    <rect y="5" width="31" height="23" fill="#fccf3e" />
    <path d="M5 20h20l2 8H3z" fill="#2f6fb8" />
    <path d="M8 21h14v3H8z" fill="#1a4f8f" />
  </svg>
);

const StoreIcon = () => (
  <svg width="30" height="30" viewBox="0 0 30 30">
    <path d="M9 6V2h12v4" fill="none" stroke="#3aaee8" strokeWidth="2" />
    <path d="M1 7a2 2 0 0 1 2-2h24a2 2 0 0 1 2 2v19a3 3 0 0 1-3 3H4a3 3 0 0 1-3-3z" fill="#f2f2f2" />
    <rect x="9" y="11" width="5.5" height="5.5" fill="#e8502a" />
    <rect x="15.5" y="11" width="5.5" height="5.5" fill="#7fb429" />
    <rect x="9" y="17.5" width="5.5" height="5.5" fill="#2aa4e8" />
    <rect x="15.5" y="17.5" width="5.5" height="5.5" fill="#f2b811" />
  </svg>
);

const EdgeIcon = () => (
  <svg width="30" height="30" viewBox="0 0 30 30">
    <defs>
      <linearGradient id="edgeA" x1="0" y1="0" x2="1" y2="0.6">
        <stop offset="0" stopColor="#2fb6d8" />
        <stop offset="1" stopColor="#5dc96a" />
      </linearGradient>
    </defs>
    <path d="M15 0c8 0 15 6 15 14 0 5-4 7-8 7-5 0-8-2-8-5 0-2 2-3 2-5s-3-3-6-3C5 8 1 11 0 15 0 6 7 0 15 0z" fill="url(#edgeA)" />
    <path d="M0 15C1 10 5 8 10 8c3 0 6 1 6 3-4 0-7 3-7 8 0 4 3 9 9 11-1 .3-2 .4-3 .4C7 30 0 24 0 15z" fill="#2f7fcc" />
    <path d="M14 16c0 3 3 5 8 5 2 0 4-.5 5.5-1.500C26 25 22 29 18 30c-6-2-9-7-9-11 0-3 2-5 5-6z" fill="#245f9e" />
  </svg>
);

const ChromeIcon = () => (
  <svg width="30" height="30" viewBox="0 0 30 30">
    <circle cx="15" cy="15" r="15" fill="#3aa757" />
    <path d="M15 0a15 15 0 0 1 13 7.5H15a7.5 7.5 0 0 0-6.500 3.700L2 5.500A15 15 0 0 1 15 0z" fill="#e0452f" />
    <path d="M28 7.5A15 15 0 0 1 15 30l6.500-11.200A7.500 7.500 0 0 0 15 7.500z" fill="#f5c02c" />
    <circle cx="15" cy="15" r="7" fill="#fff" />
    <circle cx="15" cy="15" r="5.5" fill="#4a80e8" />
  </svg>
);

const TeamsIcon = () => (
  <svg width="30" height="30" viewBox="0 0 30 30">
    <circle cx="12" cy="4.5" r="4.5" fill="#7b83eb" />
    <circle cx="23" cy="8" r="3.8" fill="#5b64c9" />
    <path d="M18 12h10a2 2 0 0 1 2 2v9a6 6 0 0 1-12 0z" fill="#6a72d8" />
    <path d="M5 11h14v13a7 7 0 0 1-14 0z" fill="#7b83eb" />
    <rect y="12" width="12" height="12" rx="2" fill="#3f4fb0" />
    <text x="6" y="21.5" textAnchor="middle" fontSize="9" fontWeight="700" fill="#fff" fontFamily="Open Sans">T</text>
  </svg>
);

const ExcelIcon = () => (
  <svg width="30" height="30" viewBox="0 0 30 30">
    <rect x="7" y="1" width="22" height="28" rx="2" fill="#1d7044" />
    <path d="M7 1h22v9H7z" fill="#33c481" />
    <path d="M18 1h11v14H18z" fill="#21a366" opacity="0.8" />
    <path d="M18 15h11v14H18z" fill="#185c37" />
    <rect y="7" width="15" height="15" rx="1.5" fill="#107c41" />
    <text x="7.5" y="18.5" textAnchor="middle" fontSize="12" fontWeight="700" fill="#fff" fontFamily="Open Sans">X</text>
  </svg>
);

const CloudIcon = () => (
  <svg width="24" height="22" viewBox="0 0 24 22">
    <path d="M6 16a5 5 0 0 1-1-9.800A6 6 0 0 1 16 5a4 4 0 0 1 2 7v4z" fill="#d8d8d8" />
    <circle cx="16" cy="15" r="6" fill="#3a8ad8" />
    <path d="M16 12v6" stroke="#fff" strokeWidth="1.5" />
  </svg>
);

const WifiIcon = () => (
  <svg width="20" height="18" viewBox="0 0 20 18">
    <path d="M1 6c5-5 13-5 18 0M4 9.500c3.500-3 8.500-3 12 0M7 13c2-1.500 4-1.500 6 0" fill="none" stroke="#eee" strokeWidth="1.6" />
    <circle cx="10" cy="16" r="1.5" fill="#eee" />
  </svg>
);

const VolumeIcon = () => (
  <svg width="20" height="18" viewBox="0 0 20 18">
    <path d="M1 6h3l5-4v14l-5-4H1z" fill="none" stroke="#eee" strokeWidth="1.3" />
    <path d="M12 5a5 5 0 0 1 0 8M15 2a9 9 0 0 1 0 14" fill="none" stroke="#aaa" strokeWidth="1.2" />
  </svg>
);

const BatteryIcon = () => (
  <svg width="26" height="16" viewBox="0 0 26 16">
    <rect x=".7" y="1" width="23" height="14" rx="3" fill="none" stroke="#eee" strokeWidth="1.3" />
    <rect x="3" y="3" width="6" height="10" rx="1" fill="#e6a020" />
    <path d="M25 6v4" stroke="#eee" strokeWidth="1.3" />
  </svg>
);

/* charts */
const cardBox = (x, y, w, h) => `${x + 3} ${y + 3} ${w - 6} ${h - 6}`;

const LineChart = () => {
  const values = [349.54065, 276.01335, 294.4672, 311.15335, 331.0524, 404.04705];
  const xs = [121.6, 156.4, 191, 226, 261, 295.6];
  const labelY = [536.7, 564.7, 557, 551, 543, 516.7];
  const toY = (v) => 679 - (v * 170.3) / 450;
  return (
    <svg viewBox={cardBox(50, 457, 334, 263)}>
      <text x="215" y="495.5" textAnchor="middle" fontSize="10.7" fill="#595959">Monthly Sales Trend</text>
      {[0, 50, 100, 150, 200, 250, 300, 350, 400, 450].map((t) => (
        <g key={t}>
          <path d={`M103 ${toY(t)}H313`} stroke="#d9d9d9" strokeWidth="1" />
          <text x="97" y={toY(t) + 3} textAnchor="end" fontSize="7.5" fill="#666">{t}</text>
        </g>
      ))}
      <text transform="translate(81 529) rotate(-90)" textAnchor="middle" fontSize="7" fontWeight="700" fill="#8a8a8a" fontFamily="DejaVu Sans">Thousands</text>
      <polyline points={values.map((v, i) => `${xs[i]},${toY(v)}`).join(" ")} fill="none" stroke="#4278b8" strokeWidth="2" />
      {values.map((v, i) => (
        <g key={v}>
          <circle cx={xs[i]} cy={toY(v)} r="2" fill="#4278b8" />
          <text x={xs[i]} y={labelY[i] + 2.5} textAnchor="middle" fontSize="7.3" fill="#555">{String(v)}</text>
          <text x={xs[i]} y="692" textAnchor="middle" fontSize="7.5" fill="#666">{i + 1}</text>
        </g>
      ))}
      <path d="M325 599h18" stroke="#4278b8" strokeWidth="2" />
      <circle cx="334" cy="599" r="2" fill="#4278b8" />
      <text x="344" y="602" fontSize="7.5" fill="#666">Total</text>
    </svg>
  );
};

const pieSlices = [
  { value: 528529.8, text: "528529.8", name: "Clothing", top: "#3e86d8", bottom: "#29599a", edge: "#6db9f2", lx: 648.6, ly: 562 },
  { value: 522389.75, text: "522389.75", name: "Electronics", top: "#e5453d", bottom: "#a92c27", edge: "#f58080", lx: 640, ly: 638.7 },
  { value: 467944.3, text: "467944.3", name: "Furniture", top: "#b6d64c", bottom: "#7f9e37", edge: "#e8f56c", lx: 548.5, ly: 626 },
  { value: 447410.15, text: "447410.15", name: "Groceries", top: "#8d5cb5", bottom: "#5f4080", edge: "#b08ce0", lx: 558.6, ly: 557 },
];

const PieChart = () => {
  const cx = 601;
  const cy = 597;
  const rx = 78;
  const ry = 79;
  const total = pieSlices.reduce((s, p) => s + p.value, 0);
  const point = (a) => [cx + rx * Math.sin(a), cy - ry * Math.cos(a)];
  let angle = 0;
  return (
    <svg viewBox={cardBox(454, 456, 345, 264)}>
      <defs>
        {pieSlices.map((s) => (
          <linearGradient key={s.name} id={`pie${s.name}`} x1="0" y1="0" x2="0" y2="1">
            <stop offset="0" stopColor={s.top} />
            <stop offset="1" stopColor={s.bottom} />
          </linearGradient>
        ))}
        <filter id="pieShadow" x="-20%" y="-20%" width="140%" height="140%">
          <feGaussianBlur stdDeviation="2.5" />
        </filter>
      </defs>
      <text x="627" y="492" textAnchor="middle" fontSize="12.4" fontWeight="700" fill="#595959">Sales by Product Category</text>
      <ellipse cx={cx} cy={cy + 3} rx={rx} ry={ry} fill="#999" filter="url(#pieShadow)" />
      {pieSlices.map((s) => {
        const start = angle;
        angle += (s.value / total) * Math.PI * 2;
        const [x0, y0] = point(start);
        const [x1, y1] = point(angle);
        return (
          <g key={s.name}>
            <path d={`M${cx} ${cy}L${x0} ${y0}A${rx} ${ry} 0 0 1 ${x1} ${y1}Z`} fill={`url(#pie${s.name})`} stroke="#2a3342" strokeWidth="0.6" />
            <path d={`M${cx} ${cy}L${x0} ${y0}`} stroke={s.edge} strokeWidth="1.5" opacity="0.9" />
            <path d={`M${x0} ${y0}A${rx} ${ry} 0 0 1 ${x1} ${y1}`} fill="none" stroke={s.edge} strokeWidth="1.2" opacity="0.45" />
          </g>
        );
      })}
      {pieSlices.map((s) => (
        <text key={s.text} x={s.lx} y={s.ly + 2.5} textAnchor="middle" fontSize="7.5" fill="#3c3c3c">{s.text}</text>
      ))}
      {pieSlices.map((s, i) => (
        <g key={`legend${s.name}`}>
          <rect x="728.5" y={573.5 + i * 14} width="4" height="4.5" fill={s.top} />
          <text x="734" y={578.5 + i * 14} fontSize="7" letterSpacing="-0.2" fill="#666">{s.name}</text>
        </g>
      ))}
    </svg>
  );
};

const RegionChart = () => {
  const ticks = [100.7, 134.4, 169.2, 203.5, 237.3, 271.7, 305.3];
  const bars = [
    { name: "North", end: 283.3, y: 791, text: "$534.58", ty: 801.7, cy: 801.7 },
    { name: "West", end: 277.5, y: 832, text: "$516.01", ty: 842.7, cy: 841.7 },
    { name: "East", end: 273.7, y: 872.7, text: "$504.92", ty: 882.7, cy: 882.7 },
    { name: "South", end: 241.5, y: 913, text: "$410.77", ty: 923.7, cy: 922.7 },
  ];
  return (
    <svg viewBox={cardBox(53.7, 734, 331, 264)}>
      <defs>
        <linearGradient id="regionBar" x1="0" y1="0" x2="0" y2="1">
          <stop offset="0" stopColor="#eaf2fe" />
          <stop offset="1" stopColor="#a5c6f6" />
        </linearGradient>
      </defs>
      <text x="220" y="773" textAnchor="middle" fontSize="11" fill="#7f7f7f">Total Sales by Region</text>
      {ticks.map((x, i) => (
        <g key={x}>
          <path d={`M${x} 781.7V944`} stroke="#d0d0d0" strokeWidth="1" />
          <text x={x} y="955" textAnchor="middle" fontSize="7.5" fill="#777">{`$${i * 100}.00`}</text>
        </g>
      ))}
      {bars.map((b) => (
        <g key={b.name}>
          <rect x="101.5" y={b.y + 21} width={b.end - 101.5} height="3" fill="#bbb" opacity="0.6" />
          <rect x="101.2" y={b.y} width={b.end - 101.2} height="20.5" fill="url(#regionBar)" stroke="#4076ba" strokeWidth="1.1" />
          <text x="93.5" y={b.cy + 2.5} textAnchor="end" fontSize="7.5" fill="#777">{b.name}</text>
          <text x={b.end + 4.5} y={b.ty + 2.5} fontSize="7.5" fill="#888">{b.text}</text>
        </g>
      ))}
      <text x="283.6" y="966.5" textAnchor="middle" fontSize="7" fill="#777">THOUSANDS</text>
      <rect x="337.5" y="873.5" width="4" height="5" fill="#cfe0fa" stroke="#4076ba" />
      <text x="343.8" y="878.5" fontSize="7.5" fill="#888">Total</text>
    </svg>
  );
};

const OrderChart = () => {
  const toY = (v) => 961.3 - (v * 189) / 450;
  const bars = [
    { name: "Hight", x: 524.9, v: 405 },
    { name: "low", x: 602.1, v: 42 },
    { name: "Medium", x: 678.7, v: 53 },
  ];
  return (
    <svg viewBox={cardBox(460.8, 729, 342, 264)}>
      <defs>
        <linearGradient id="orderBar" x1="0" y1="0" x2="0" y2="1">
          <stop offset="0" stopColor="#3a80cf" />
          <stop offset="1" stopColor="#295a9b" />
        </linearGradient>
      </defs>
      <text x="630.5" y="758.5" textAnchor="middle" fontSize="12.2" fontWeight="700" fill="#1f497d">Order Category Distribution</text>
      {[0, 50, 100, 150, 200, 250, 300, 350, 400, 450].map((t) => (
        <g key={t}>
          <path d={`M506.2 ${toY(t)}H736.4`} stroke="#d5e3f5" strokeWidth="1" />
          <text x="499.6" y={toY(t) + 2.5} textAnchor="end" fontSize="7.5" fill="#3a6ea5">{t}</text>
        </g>
      ))}
      {bars.map((b) => (
        <g key={b.name}>
          <rect x={b.x} y={toY(b.v)} width="39.1" height={961.3 - toY(b.v)} fill="url(#orderBar)" />
          <text x={b.x + 19.5} y={toY(b.v) - 5.5} textAnchor="middle" fontSize="7.5" fill="#3a6ea5">{b.v}</text>
          <text x={b.x + 19.5} y="972.5" textAnchor="middle" fontSize="7.5" fill="#3a6ea5">{b.name}</text>
        </g>
      ))}
      <rect x="750" y="869.5" width="3.5" height="4.5" fill="#2f75c4" />
      <text x="754.9" y="874.5" fontSize="7.5" fill="#3a6ea5">Total</text>
    </svg>
  );
};

const columnNames = () => {
  const letters = "ABCDEFGHIJKLMNOPQRSTUVWXYZ".split("");
  const second = "ABCDEFGHIJKLMNOPQRSTU".split("").map((l) => `A${l}`);
  return [...letters, ...second];
};

const kpis = [
  { x: 49, y: 379, w: 104, h: 40, pt: 1, size: 11, gap: 5, tx: 0, vx: 0, title: "Total of Net Sales", value: "$1,966,274.00" },
  { x: 204, y: 378, w: 101, h: 40, pt: 2, size: 11, gap: 5, tx: 4, vx: 0, title: "Count of OrderID", value: "500" },
  { x: 376, y: 378, w: 101, h: 41, pt: 3, size: 8.6, gap: 3, tx: 0, vx: 8, title: "Total of Discount Amount", value: "$155,433.00" },
  { x: 534, y: 375, w: 114, h: 43, pt: 3, size: 11, gap: 4, tx: 3, vx: 10, title: "Total Quantity", value: "2,724" },
  { x: 696, y: 373, w: 102, h: 42, pt: 2, size: 8.4, gap: 1, tx: 0, vx: 0, title: "Average of Order value", value: "$3,932.55" },
];

const sheetTabs = [
  ["KPI", 54, 6],
  ["Sheet4", 79, 0],
  ["Sheet5", 79, 0],
  ["Sheet6", 79, 0],
  ["Table1", 78, 0],
  ["SalesData", 102, 0],
  ["Sheet3", 80, 0],
];

const App = () => (
  <Window>
    <GlobalStyle />
    <TopBand>
      <BandArt viewBox="0 0 1920 81" preserveAspectRatio="none">
        <defs>
          <linearGradient id="bandFade" x1="0" y1="0" x2="1" y2="0">
            <stop offset="0" stopColor="#0a0a0a" />
            <stop offset="1" stopColor="#161616" />
          </linearGradient>
        </defs>
        <rect x="1260" width="660" height="81" fill="url(#bandFade)" />
        <path d="M1320 20c10-18 50-20 70-4 6 10 0 24 4 36-20 12-50 14-74 0-8-10-6-22 0-32z" fill="#151515" />
        <path d="M1580 0h190c8 16 30 26 34 48-40 16-90 6-124 10-30 4-70 0-90-14-10-14-20-30-10-44z" fill="#1b1b1b" />
      </BandArt>
      <TitleRow>
        <Qat>
          <QatSlot $w={18}><SaveIcon /></QatSlot>
          <QatSlot $w={20} $ml={17}><UndoIcon /></QatSlot>
          <QatSlot $w={10} $ml={6}><Chevron w={8} /></QatSlot>
          <QatSlot $w={20} $ml={10}><UndoIcon flip color="#6a6a6a" /></QatSlot>
          <QatSlot $w={10} $ml={5}><Chevron w={8} color="#6a6a6a" /></QatSlot>
          <QatSlot $w={8} $ml={18}><DownTriangle /></QatSlot>
        </Qat>
        <DocTitle>{"sama mohamed nabil younes.xlsx  -  Excel"}</DocTitle>
        <WindowTools>
          <UserName>Sama Mohammad</UserName>
          <AvatarWrap><Avatar /></AvatarWrap>
          <ToolSlot><RibbonDisplayIcon /></ToolSlot>
          <ToolSlot><MinIcon /></ToolSlot>
          <ToolSlot><RestoreIcon /></ToolSlot>
          <ToolSlot><CloseIcon /></ToolSlot>
        </WindowTools>
      </TitleRow>
      <TabsRow>
        <Tab>File</Tab>
        <Tab $active $pad={13.5} $ml={15}>Home</Tab>
        <Tab>Insert</Tab>
        <Tab>Draw</Tab>
        <Tab>Page Layout</Tab>
        <Tab>Formulas</Tab>
        <Tab>Data</Tab>
        <Tab>Review</Tab>
        <Tab>View</Tab>
        <Tab>Help</Tab>
        <TellMe><BulbIcon />Tell me what you want to do</TellMe>
        <ShareButton><ShareIcon />Share<Chevron w={8} /></ShareButton>
      </TabsRow>
    </TopBand>

    <Ribbon>
      <Group $w={205}>
        <GroupBody $pl={16}>
          <BigButton $w={40}>
            <BigIcon><PasteIcon /></BigIcon>
            <BigLine>Paste</BigLine>
            <BigLine><Chevron /></BigLine>
          </BigButton>
          <SmallStack $w={140} $ml={10}>
            <SmallRow><SmallIcon $mr={4}><CutIcon /></SmallIcon>Cut</SmallRow>
            <SmallRow><SmallIcon $mr={4}><CopyIcon /></SmallIcon>Copy<Spread $ml={21}><Chevron /></Spread></SmallRow>
            <SmallRow><SmallIcon $mr={4}><PainterIcon /></SmallIcon>Format Painter</SmallRow>
          </SmallStack>
        </GroupBody>
        <GroupLabel $pr={24}>Clipboard</GroupLabel>
        <Launcher />
      </Group>

      <Group $w={289}>
        <GroupBody $pl={11} $pt={0}>
          <ToolColumn>
            <ToolRow $h={29}>
              <ComboBox $w={143} $mr={2}>Calibri<DownTriangle /></ComboBox>
              <ComboBox $w={63}>11<DownTriangle /></ComboBox>
              <Slot $w={33}><GrowFont up /></Slot>
              <Slot $w={30}><GrowFont /></Slot>
            </ToolRow>
            <ToolRow>
              <Slot $w={28} $bold $size={16}>B</Slot>
              <Slot $w={31} $italic $size={16}>I</Slot>
              <Slot $w={29} $under $size={16}>U</Slot>
              <Slot $w={16}><Chevron /></Slot>
              <Slot $w={8} />
              <ToolSep />
              <Slot $w={34}><BordersIcon /></Slot>
              <Slot $w={10}><Chevron /></Slot>
              <Slot $w={10} />
              <ToolSep />
              <Slot $w={34}><FillColorIcon /></Slot>
              <Slot $w={10}><Chevron /></Slot>
              <Slot $w={5} />
              <Slot $w={34}><FontColorIcon /></Slot>
              <Slot $w={10}><Chevron /></Slot>
            </ToolRow>
          </ToolColumn>
        </GroupBody>
        <GroupLabel $pr={24}>Font</GroupLabel>
        <Launcher />
      </Group>

      <Group $w={404}>
        <GroupBody $pl={8} $pt={0}>
          <ToolColumn>
            <ToolRow $h={29}>
              <Slot $w={30}><AlignVIcon mode="top" /></Slot>
              <Slot $w={32}><AlignVIcon mode="mid" /></Slot>
              <Slot $w={29} $active><AlignVIcon mode="bottom" /></Slot>
              <Slot $w={2} />
              <ToolSep />
              <Slot $w={34}><OrientIcon /></Slot>
              <Slot $w={8}><Chevron /></Slot>
              <Slot $w={13} />
              <ToolSep />
              <Slot $w={34}><RtlIcon /></Slot>
              <Slot $w={12}><Chevron /></Slot>
            </ToolRow>
            <ToolRow>
              <Slot $w={30}><AlignHIcon mode="left" /></Slot>
              <Slot $w={32}><AlignHIcon mode="center" /></Slot>
              <Slot $w={29}><AlignHIcon mode="right" /></Slot>
              <Slot $w={2} />
              <ToolSep />
              <Slot $w={38}><IndentIcon out /></Slot>
              <Slot $w={22}><IndentIcon /></Slot>
            </ToolRow>
          </ToolColumn>
          <TallSep />
          <ToolColumn>
            <ToolRow $h={29}>
              <Slot $w={33}><WrapIcon /></Slot>
              Wrap Text
            </ToolRow>
            <ToolRow>
              <Slot $w={33}><MergeIcon /></Slot>
              Merge &amp; Center
              <Spread $ml={20}><Chevron /></Spread>
            </ToolRow>
          </ToolColumn>
        </GroupBody>
        <GroupLabel $pr={24}>Alignment</GroupLabel>
        <Launcher />
      </Group>

      <Group $w={194}>
        <GroupBody $pl={10} $pt={0}>
          <ToolColumn>
            <ToolRow $h={29}>
              <ComboBox $w={173}>General<DownTriangle /></ComboBox>
            </ToolRow>
            <ToolRow>
              <Slot $w={28} $size={18}>$</Slot>
              <Slot $w={16}><Chevron /></Slot>
              <Slot $w={36} $size={17}>%</Slot>
              <Slot $w={24} $size={18} $bold>,</Slot>
              <Slot $w={7} />
              <ToolSep />
              <Slot $w={37}><DecimalIcon inc /></Slot>
              <Slot $w={23}><DecimalIcon /></Slot>
            </ToolRow>
          </ToolColumn>
        </GroupBody>
        <GroupLabel $pr={24}>Number</GroupLabel>
        <Launcher />
      </Group>

      <Group $w={242}>
        <GroupBody $pl={11}>
          <BigButton $w={90}>
            <BigIcon><ConditionalIcon /></BigIcon>
            <BigLine>Conditional</BigLine>
            <BigLine>Formatting <Chevron w={8} /></BigLine>
          </BigButton>
          <BigButton $w={74}>
            <BigIcon><FormatTableIcon /></BigIcon>
            <BigLine>Format as</BigLine>
            <BigLine>Table <Chevron w={8} /></BigLine>
          </BigButton>
          <BigButton $w={54}>
            <BigIcon><CellStylesIcon /></BigIcon>
            <BigLine>Cell</BigLine>
            <BigLine>Styles <Chevron w={8} /></BigLine>
          </BigButton>
        </GroupBody>
        <GroupLabel>Styles</GroupLabel>
      </Group>

      <Group $w={177}>
        <GroupBody $pl={10}>
          <BigButton $w={52}>
            <BigIcon><InsertIcon /></BigIcon>
            <BigLine>Insert</BigLine>
            <BigLine><Chevron /></BigLine>
          </BigButton>
          <BigButton $w={50}>
            <BigIcon><DeleteIcon /></BigIcon>
            <BigLine>Delete</BigLine>
            <BigLine><Chevron /></BigLine>
          </BigButton>
          <BigButton $w={56}>
            <BigIcon><FormatCellsIcon /></BigIcon>
            <BigLine>Format</BigLine>
            <BigLine><Chevron /></BigLine>
          </BigButton>
        </GroupBody>
        <GroupLabel>Cells</GroupLabel>
      </Group>

      <Group $w={262}>
        <GroupBody $pl={14}>
          <SmallStack $w={120} $mr={4}>
            <SmallRow>
              <SmallIcon><SigmaGlyph>Σ</SigmaGlyph></SmallIcon>AutoSum<Spread $ml={22}><Chevron /></Spread>
            </SmallRow>
            <SmallRow><SmallIcon><FillIcon /></SmallIcon>Fill<Spread $ml={4}><Chevron w={8} /></Spread></SmallRow>
            <SmallRow><SmallIcon><EraserIcon /></SmallIcon>Clear<Spread $ml={4}><Chevron w={8} /></Spread></SmallRow>
          </SmallStack>
          <BigButton $w={56}>
            <BigIcon><SortIcon /></BigIcon>
            <BigLine>Sort &amp;</BigLine>
            <BigLine>Filter <Chevron w={8} /></BigLine>
          </BigButton>
          <BigButton $w={58}>
            <BigIcon><FindIcon /></BigIcon>
            <BigLine>Find &amp;</BigLine>
            <BigLine>Select <Chevron w={8} /></BigLine>
          </BigButton>
        </GroupBody>
        <GroupLabel>Editing</GroupLabel>
      </Group>

      <Group $w={78}>
        <GroupBody>
          <BigButton $w={78}>
            <BigIcon><AddInIcon /></BigIcon>
            <BigLine>Add-ins</BigLine>
          </BigButton>
        </GroupBody>
        <GroupLabel>Add-ins</GroupLabel>
      </Group>
      <CollapseButton>
        <svg width="12" height="8" viewBox="0 0 12 8">
          <path d="M1 7l5-5.5L11 7" fill="none" stroke="#ccc" strokeWidth="1.2" />
        </svg>
      </CollapseButton>
    </Ribbon>

    <FormulaBar>
      <NameBox>U33<DownTriangle /></NameBox>
      <FormulaDots><span /><span /><span /></FormulaDots>
      <FormulaButtons>
        <Slot $w={45}><IconX color="#6a6a6a" /></Slot>
        <Slot $w={45}><IconCheck color="#6a6a6a" /></Slot>
        <Slot $w={42}><FxText>fx</FxText></Slot>
      </FormulaButtons>
      <FormulaInput><DownTriangle $color="#eee" /></FormulaInput>
    </FormulaBar>

    <HeaderRow>
      <CornerCell>
        <svg width="5" height="5" viewBox="0 0 5 5"><path d="M5 0v5H0z" fill="#777" /></svg>
      </CornerCell>
      <ColHeaders>
        {columnNames().map((name) => (
          <ColHead key={name} $wide={name === "M"} $sel={name === "U"}>{name}</ColHead>
        ))}
      </ColHeaders>
    </HeaderRow>

    <SheetRow>
      <RowHeaders>
        {Array.from({ length: 68 }, (_, i) => (
          <RowHead key={i} $sel={i === 32}>{i + 1}</RowHead>
        ))}
      </RowHeaders>
      <Canvas>
        <DashPanel>
          <Banner>Sales Overview Dashboard</Banner>
          {kpis.map((k) => (
            <KpiCard key={k.title} $x={k.x} $y={k.y} $w={k.w} $h={k.h} $pt={k.pt}>
              <KpiTitle $size={k.size} $tx={k.tx}>{k.title}</KpiTitle>
              <KpiValue $gap={k.gap} $vx={k.vx}>{k.value}</KpiValue>
            </KpiCard>
          ))}
          <ChartCard $x={50} $y={457} $w={334} $h={263}><LineChart /></ChartCard>
          <ChartCard $x={454} $y={456} $w={345} $h={264}><PieChart /></ChartCard>
          <ChartCard $x={53.7} $y={734} $w={331} $h={264}><RegionChart /></ChartCard>
          <ChartCard $x={460.8} $y={729} $w={342} $h={264}><OrderChart /></ChartCard>
          <SelectedCell />
        </DashPanel>
      </Canvas>
      <VScroll>
        <ScrollButton $h={19}><ArrowTri dir="up" /></ScrollButton>
        <ScrollThumb />
        <ScrollTrack />
        <ScrollButton $h={14}><ArrowTri dir="down" /></ScrollButton>
      </VScroll>
    </SheetRow>

    <TabStrip>
      <TabNav>
        <ArrowTri dir="left" color="#8a8a8a" />
        <ArrowTri dir="right" color="#8a8a8a" />
      </TabNav>
      {sheetTabs.map(([name, w, pr]) => (
        <SheetTab key={name} $w={w} $pr={pr}>{name}</SheetTab>
      ))}
      <SheetTab $active $w={78}>Sheet2</SheetTab>
      <AddSheet>
        <svg width="11" height="11" viewBox="0 0 11 11"><path d="M5.5 0v11M0 5.5h11" stroke="#eee" strokeWidth="1.5" /></svg>
      </AddSheet>
      <HScrollArea>
        <HDots><span /><span /><span /></HDots>
        <HButton><ArrowTri dir="left" /></HButton>
        <HThumb />
        <HTrack />
        <HButton><ArrowTri dir="right" /></HButton>
      </HScrollArea>
    </TabStrip>

    <StatusBar>
      <ReadyText>Ready</ReadyText>
      <AccessIcon />
      <AccessText>Accessibility: Investigate</AccessText>
      <StatusRight>
        <ViewButton $active><GridViewIcon /></ViewButton>
        <ViewButton><PageViewIcon /></ViewButton>
        <ViewButton><BreakViewIcon /></ViewButton>
        <ZoomSign $w={25}>−</ZoomSign>
        <ZoomTrack><ZoomThumb /><ZoomTick /></ZoomTrack>
        <ZoomSign $w={22}>+</ZoomSign>
        <ZoomValue>50%</ZoomValue>
      </StatusRight>
    </StatusBar>

    <Taskbar>
      <Weather>
        <UmbrellaIcon />
        <WeatherBadge>3</WeatherBadge>
        <WeatherText>
          <span>أمطار خفيفة</span>
          <small>غداً</small>
        </WeatherText>
      </Weather>
      <StartButton><WinLogo /></StartButton>
      <SearchBox>
        <SearchIcon />
        <span>Search</span>
        <SearchDoodle />
      </SearchBox>
      <TaskSlot $w={54}><TaskViewIcon /></TaskSlot>
      <TaskSlot $w={52}><CopilotIcon /></TaskSlot>
      <TaskSlot $w={54} $dot><ExplorerIcon /></TaskSlot>
      <TaskSlot $w={54}><StoreIcon /></TaskSlot>
      <TaskSlot $w={56} $dot><EdgeIcon /></TaskSlot>
      <TaskSlot $w={55}><ChromeIcon /></TaskSlot>
      <TaskSlot $w={53}><TeamsIcon /></TaskSlot>
      <TaskSlot $w={60} $active><ExcelTile><ExcelIcon /></ExcelTile></TaskSlot>
      <TraySlot $w={225} />
      <TraySlot $w={40}><svg width="14" height="9" viewBox="0 0 14 9"><path d="M1 8l6-6.5L13 8" fill="none" stroke="#eee" strokeWidth="1.7" /></svg></TraySlot>
      <TraySlot $w={36}><CloudIcon /></TraySlot>
      <TraySlot $w={60}>ع</TraySlot>
      <TraySlot $w={38}><WifiIcon /></TraySlot>
      <TraySlot $w={18}><VolumeIcon /></TraySlot>
      <TraySlot $w={50}><BatteryIcon /></TraySlot>
      <Clock>
        <span>8:05 PM</span>
        <span>3/12/2026</span>
      </Clock>
    </Taskbar>

    <Watermark>
      <WatermarkArabic>مستقل</WatermarkArabic>
      <WatermarkLatin>mostaql.com</WatermarkLatin>
    </Watermark>
  </Window>
);

export default App;
